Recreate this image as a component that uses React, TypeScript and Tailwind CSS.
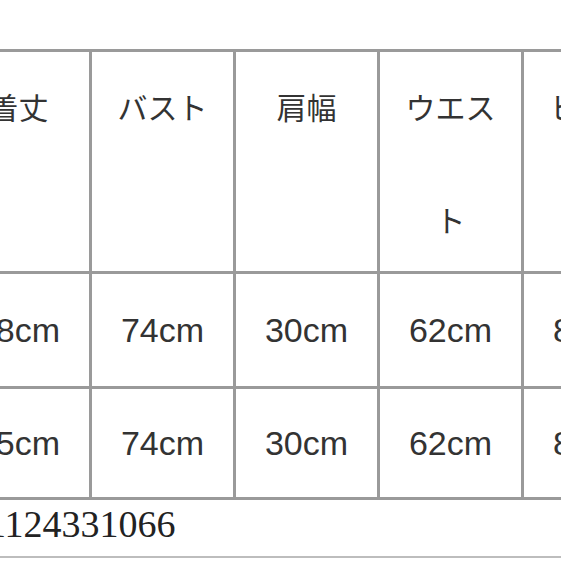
import React from "react";

const jp = { fontFamily: '"Noto Sans CJK JP", "Noto Sans", sans-serif' };
const num = { fontFamily: '"Liberation Sans", Arial, sans-serif' };
const serif = { fontFamily: '"Liberation Serif", "Times New Roman", serif' };

const headers: string[][] = [["着丈"], ["バスト"], ["肩幅"], ["ウエス", "ト"], ["ヒップ"]];
const rows: string[][] = [
  ["58cm", "74cm", "30cm", "62cm", "88cm"],
  ["55cm", "74cm", "30cm", "62cm", "88cm"],
];

export default function App() {
  return (
    <div className="w-[561px] h-[561px] overflow-hidden bg-white text-[#333]">
      <div className="pt-[49px] ml-[-55px]">
        <div className="grid grid-cols-[repeat(5,141px)] grid-rows-[219px_112px_108px] gap-[3px] p-[3px] bg-[#9a9a9a] w-max">
          {headers.map((lines, i) => (
            <div key={"h" + i} className="bg-white flex flex-col items-center pt-[36px] gap-[77px]" style={jp}>
              {lines.map((l, j) => (
                <div key={j} className="text-[30px] leading-[36px] whitespace-nowrap">
                  {l}
                </div>
              ))}
            </div>
          ))}
          {rows.map((r, ri) =>
            r.map((c, ci) => (
              <div
                key={"r" + ri + "c" + ci}
                className="bg-white flex items-center justify-center text-[34px]"
                style={num}
              >
                {c}
              </div>
            ))
          )}
        </div>
      </div>
      <div className="h-[58px] border-b-2 border-[#bdbdbd]">
        <div className="pt-[5px] ml-[-13px] text-[38px] leading-[38px] text-[#222]" style={serif}>
          1124331066
        </div>
      </div>
    </div>
  );
}
